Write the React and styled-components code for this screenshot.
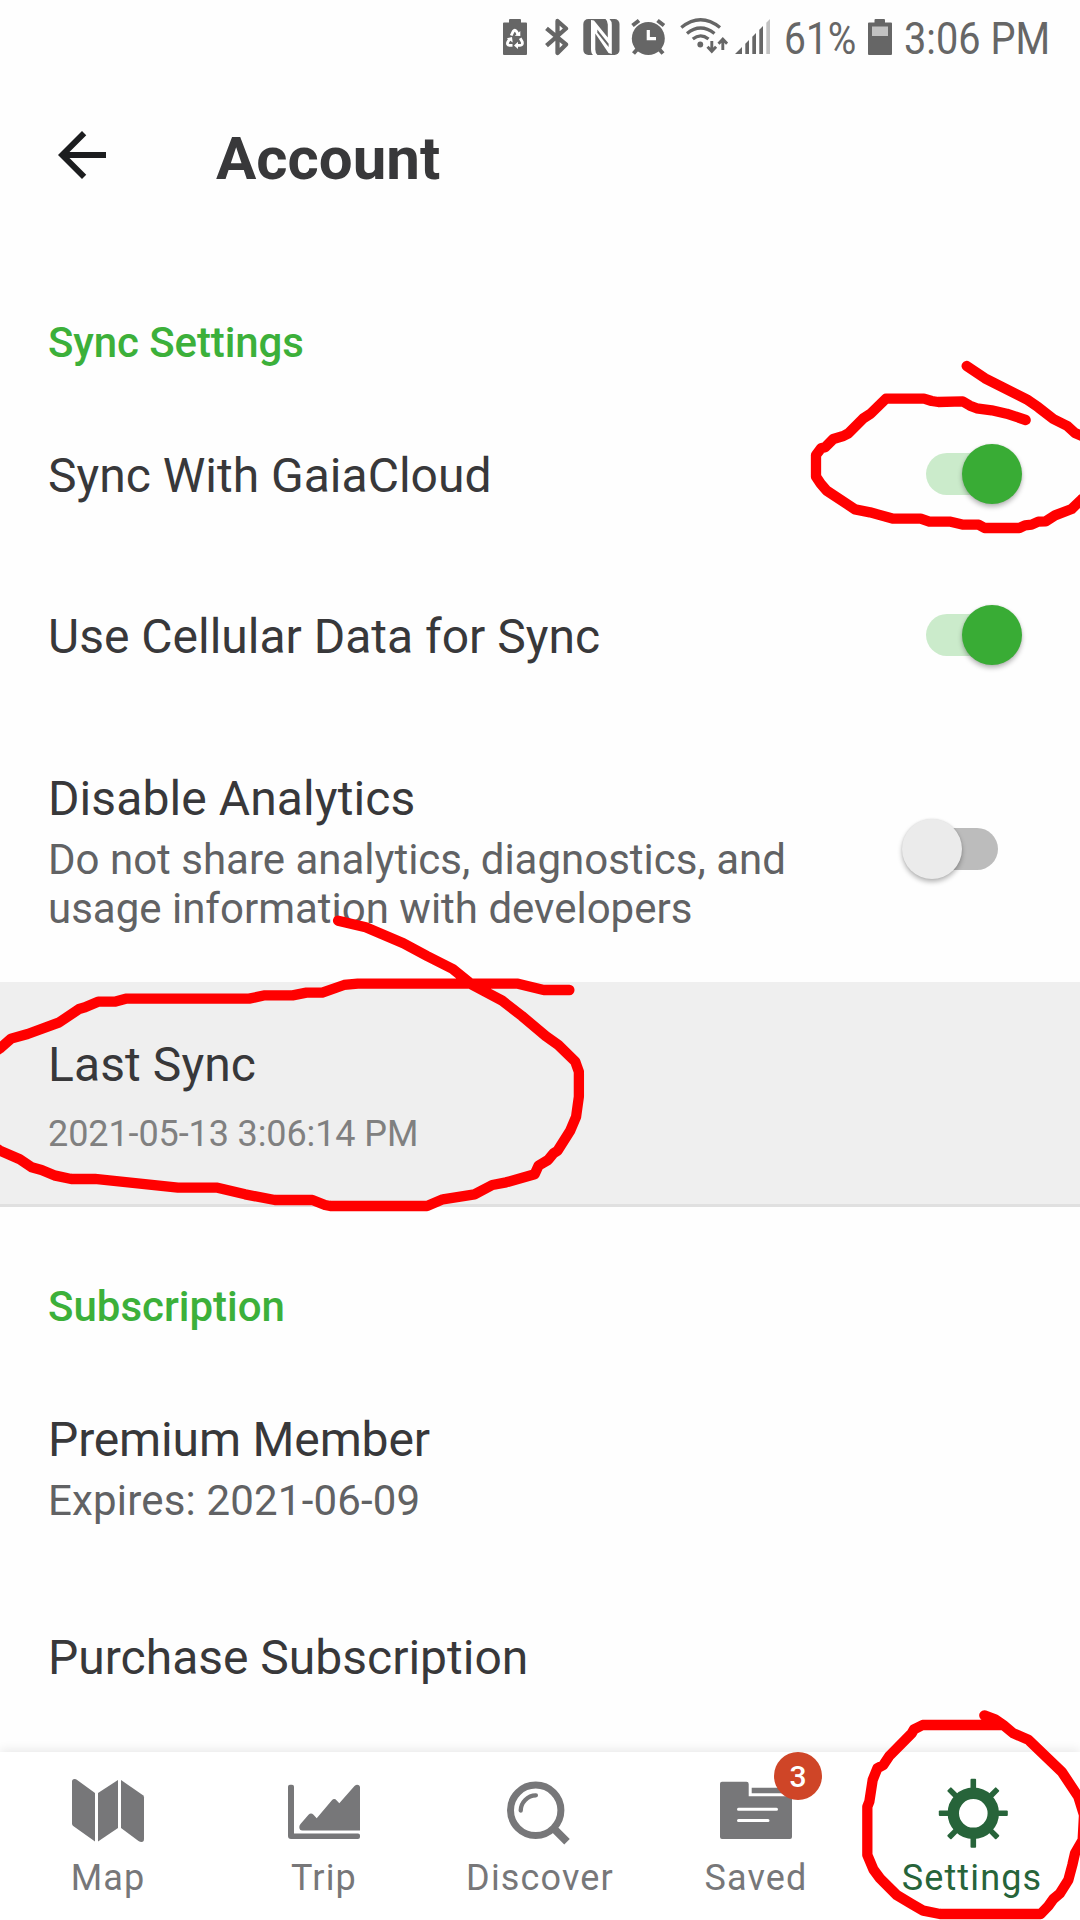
import React from "react";
import styled, { createGlobalStyle, css } from "styled-components";

const Global = createGlobalStyle`
  * { box-sizing: border-box; }
  html, body { margin: 0; padding: 0; background: #fefefe; }
  body { font-family: Roboto, "Liberation Sans", sans-serif; }
`;

const Screen = styled.div`
  position: relative;
  width: 1080px;
  height: 1920px;
  display: flex;
  flex-direction: column;
  overflow: hidden;
  background: #fefefe;
`;

const StatusBar = styled.header`
  height: 72px;
  padding: 18px 32px 0 503px;
  display: flex;
  align-items: flex-start;
  color: #666;
`;

const StatusIcon = styled.svg`
  flex: none;
  display: block;
  width: ${(p) => p.$w}px;
  height: 38px;
  margin-right: ${(p) => p.$gap || 0}px;
`;

const StatusText = styled.span`
  flex: none;
  width: ${(p) => p.$w}px;
  margin-right: ${(p) => p.$gap || 0}px;
  font-size: 45px;
  line-height: 41px;
  white-space: nowrap;
  transform: scaleX(${(p) => p.$scale});
  transform-origin: left;
`;

const TitleBar = styled.div`
  display: flex;
  align-items: flex-start;
  gap: 98px;
  height: 168px;
  padding: 47px 46px 0;
`;

const BackIcon = styled.svg`
  display: block;
  width: 72px;
  height: 72px;
  fill: #1c1d1f;
`;

const PageTitle = styled.h1`
  margin: 0;
  font-size: 60px;
  line-height: 79px;
  font-weight: 700;
  color: #38383a;
`;

const Content = styled.main`
  flex: 1;
  min-height: 0;
  overflow: hidden;
`;

const SectionTitle = styled.h2`
  margin: 0;
  padding: ${(p) => p.$top}px 48px ${(p) => p.$bottom}px;
  font-size: 42px;
  line-height: 56px;
  font-weight: 500;
  letter-spacing: ${(p) => p.$tracking || 0}px;
  color: #3cb03a;
`;

const Row = styled.div`
  display: flex;
  align-items: center;
  justify-content: space-between;
  height: ${(p) => p.$h}px;
  padding: 0 58px 0 48px;
  ${(p) =>
    p.$pressed &&
    css`
      background: #efefef;
      border-bottom: 3px solid #e0e0e0;
    `}
`;

const RowText = styled.div`
  display: flex;
  flex-direction: column;
  gap: ${(p) => p.$gap || 0}px;
`;

const Label = styled.span`
  padding-top: 4px;
  display: block;
  font-size: 48px;
  line-height: 58px;
  letter-spacing: ${(p) => p.$tracking || 0}px;
  color: #38383a;
`;

const Description = styled.span`
  max-width: 760px;
  font-size: 42px;
  line-height: 49px;
  letter-spacing: ${(p) => p.$tracking || 0}px;
  color: #616264;
`;

const Timestamp = styled.span`
  font-size: 36px;
  line-height: 42px;
  letter-spacing: -0.1px;
  color: #808080;
`;

const SwitchBox = styled.span`
  position: relative;
  flex: none;
  width: 120px;
  height: 60px;
  padding: 9px 24px;
  display: block;
`;

const Track = styled.span`
  display: block;
  height: 42px;
  border-radius: 21px;
  background: ${(p) => (p.$on ? "#cbebcb" : "#bcbcbc")};
`;

const Thumb = styled.span`
  position: absolute;
  top: 0;
  left: ${(p) => (p.$on ? 60 : 0)}px;
  width: 60px;
  height: 60px;
  border-radius: 50%;
  background: ${(p) => (p.$on ? "#39ac35" : "#ebebeb")};
  box-shadow: 0 3px 5px rgba(0, 0, 0, 0.28), 0 0 2px rgba(0, 0, 0, 0.1);
`;

const TabBar = styled.nav`
  flex: none;
  height: 168px;
  display: grid;
  grid-template-columns: repeat(5, 1fr);
  background: #fff;
  box-shadow: 0 -2px 10px rgba(0, 0, 0, 0.09);
`;

const Tab = styled.div`
  display: flex;
  flex-direction: column;
  align-items: center;
  gap: 9px;
  padding-top: 24px;
  color: ${(p) => (p.$active ? "#27643a" : "#777779")};
`;

const TabGlyph = styled.div`
  position: relative;
  width: 72px;
  height: 72px;
  svg {
    display: block;
    width: 72px;
    height: 72px;
    overflow: visible;
  }
`;

const TabLabel = styled.span`
  font-size: 36px;
  line-height: 42px;
  letter-spacing: 1.15px;
`;

const Badge = styled.span`
  position: absolute;
  top: -24px;
  left: 54px;
  width: 48px;
  height: 48px;
  border-radius: 50%;
  background: #cf4527;
  color: #fff;
  font-size: 30px;
  font-weight: 500;
  line-height: 49px;
  text-align: center;
`;

const Ink = styled.svg`
  position: absolute;
  inset: 0;
  width: 1080px;
  height: 1920px;
  pointer-events: none;
  polyline {
    fill: none;
    stroke: #ff0000;
    stroke-width: 10.3px;
    stroke-linecap: round;
    stroke-linejoin: round;
    vector-effect: non-scaling-stroke;
  }
`;

const Switch = ({ on }) => (
  <SwitchBox role="switch" aria-checked={on}>
    <Track $on={on} />
    <Thumb $on={on} />
  </SwitchBox>
);

const MapGlyph = () => (
  <svg viewBox="0 0 72 72" fill="currentColor">
    <path d="M0 5.5Q0 3 2.5 3Q4 3 5.5 4.200L23 17V65.500L1.200 50Q0 49 0 47.500Z" />
    <path d="M26 17L46 4V52L26 65.500Z" />
    <path d="M49 4L71 19.200Q72 20 72 21.500V63Q72 66 69.500 66Q68 66 66.500 65L49 52Z" />
  </svg>
);

const TripGlyph = () => (
  <svg viewBox="0 0 72 72" fill="currentColor">
    <path d="M2 8.700H4Q6 8.700 6 10.700V57.500H70Q72 57.500 72 59.500V61Q72 63 70 63H3Q0 63 0 60V10.700Q0 8.700 2 8.700Z" />
    <path d="M14.500 54.500Q11.300 54.500 11.300 51Q11.300 49.500 12.500 48L20.500 38.700Q23 36.200 25.500 38.700L28.700 42.300L43.700 24.500Q46.300 21.700 48.700 24.500L51.300 27.300L66.500 10Q69 7.700 71 9.300Q72 10 72 11.500V54.500Z" />
  </svg>
);

const DiscoverGlyph = () => (
  <svg viewBox="0 0 72 72" fill="none" stroke="currentColor">
    <circle cx="31.700" cy="34.300" r="25.200" strokeWidth="7" />
    <path d="M16.700 34.600A15.500 15.500 0 0 1 31.900 19.400" strokeWidth="4.300" strokeLinecap="round" />
    <path d="M50 52.800L63 65.800" strokeWidth="7.800" />
  </svg>
);

const SavedGlyph = () => (
  <svg viewBox="0 0 72 72" fill="currentColor">
    <path d="M2 5.700H26.500Q28.700 5.700 28.700 8V20.300H72V61Q72 63 70 63H2Q0 63 0 61V7.700Q0 5.700 2 5.700Z" />
    <path d="M31.700 11.700H72V17.300H31.700Z" />
    <path d="M18.500 33.200H56.500M18.500 44.600H48" stroke="#fff" strokeWidth="3" strokeLinecap="round" />
  </svg>
);

const SettingsGlyph = () => (
  <svg viewBox="0 0 72 72" fill="none" stroke="currentColor">
    <circle cx="37.300" cy="37.300" r="20" strokeWidth="11.400" />
    {[0, 45, 90, 135, 180, 225, 270, 315].map((a) => (
      <rect
        key={a}
        x="34.500"
        y="2.800"
        width="5.600"
        height="11"
        rx="1"
        fill="currentColor"
        stroke="none"
        transform={`rotate(${a} 37.3 37.3)`}
      />
    ))}
  </svg>
);

const StatusIcons = () => (
  <>
    <StatusIcon $w={24} $gap={18} viewBox="0 0 24 38" fill="currentColor">
      <path d="M7 1H17Q18 1 18 2V4.500H23Q24 4.500 24 5.500V36Q24 37 23 37H1Q0 37 0 36V5.500Q0 4.500 1 4.500H6V2Q6 1 7 1Z" />
      <g fill="none" stroke="#fff" strokeWidth="2.800" strokeLinejoin="round">
        <path d="M8.200 17.500L10.200 13.300Q11.800 11.200 13.400 13.300L15 16.200" />
        <path d="M17.200 20.200L19.300 24Q20 27.200 17 27.400H14" />
        <path d="M9.500 27.400H6.500Q3.600 27.200 4.800 24L6.600 21" />
      </g>
      <path d="M11.800 17.700L17.300 18V13Z M15 23.800V31L11 27.400Z M3.800 20.200L9 19L9.700 24.500Z" fill="#fff" />
    </StatusIcon>
    <StatusIcon $w={24} $gap={14} viewBox="0 0 24 38" fill="none" stroke="currentColor" strokeWidth="4.300" strokeLinejoin="round">
      <path d="M1.500 10.300L21 26.500L12.500 35V3L21 10.500L1.500 27.700" />
    </StatusIcon>
    <StatusIcon $w={37} $gap={11} viewBox="0 0 37 38">
      <rect x="0.300" y="1" width="36.200" height="36" rx="5" fill="currentColor" />
      <path d="M8 2L11 2.500L24.800 19.500V6.500Q24.800 3 22.500 1H26.500Q28.800 3 28.800 7V36L25.500 35L12.300 15.500V31.500Q12.300 35 14.500 37H10Q8 35.500 8 31Z" fill="#fff" />
      <path d="M14.300 11.500L25.600 25.800V29L14.300 14.800Z" fill="currentColor" />
    </StatusIcon>
    <StatusIcon $w={36} $gap={13} viewBox="0 0 36 38" fill="currentColor">
      <circle cx="17.300" cy="20.500" r="16.500" />
      <path d="M1.500 7.500L8 2.500M33 7.500L26.500 2.500M6.500 31L2.500 35.500M28 31L32 35.500" stroke="currentColor" strokeWidth="4" />
      <path d="M17.300 12V20.700H25" fill="none" stroke="#fff" strokeWidth="3.200" />
    </StatusIcon>
    <StatusIcon $w={48} $gap={7} viewBox="0 0 48 38" fill="none" stroke="currentColor" strokeWidth="3.300">
      <path d="M1.300 9.500Q20.500 -6 40 9.500M7 15.500Q20.500 4.500 34.500 15.500M12.800 21Q20.500 14.800 28.500 21" />
      <circle cx="20.300" cy="26.500" r="2.900" fill="currentColor" stroke="none" />
      <path d="M31.800 23V33M27.500 28.800L31.800 33.300L36.100 28.800M42.800 32V22.500M38.500 25.700L42.800 21.200L47.100 25.700" strokeWidth="2.900" />
    </StatusIcon>
    <StatusIcon $w={36} $gap={13} viewBox="0 0 36 38" fill="currentColor">
      <path d="M0 36L7 29V36ZM10.300 25.700L14 22V36H10.300ZM17.300 18.700L21 15V36H17.300ZM24.300 11.700L28 8V36H24.300Z" />
      <path d="M31.300 4.700L35 1V36H31.300Z" fill="#c2c2c2" />
    </StatusIcon>
    <StatusText $w={72} $gap={12} $scale={0.865}>61%</StatusText>
    <StatusIcon $w={24} $gap={12} viewBox="0 0 24 38" fill="currentColor">
      <path d="M7.500 1H16Q17 1 17 2V4.500H23Q24 4.500 24 5.500V36Q24 37 23 37H1Q0 37 0 36V5.500Q0 4.500 1 4.500H6.500V2Q6.500 1 7.500 1Z" />
      <path d="M4 8.500H20V18H4Z" fill="#c2c2c2" />
    </StatusIcon>
    <StatusText $w={144} $scale={0.882}>3:06 PM</StatusText>
  </>
);

const TABS = [
  { name: "Map", Glyph: MapGlyph },
  { name: "Trip", Glyph: TripGlyph },
  { name: "Discover", Glyph: DiscoverGlyph },
  { name: "Saved", Glyph: SavedGlyph, badge: 3 },
  { name: "Settings", Glyph: SettingsGlyph, active: true },
];

const Annotations = () => (
  <Ink viewBox="0 0 1080 1920">
    <g transform="translate(780 340) scale(0.33333)">
      <polyline points="737,240 680,221 635,211 590,205 570,197 548,184 475,186 455,183 432,176 318,176 272,221 250,235 205,280 190,288 160,297 135,322 123,325 108,345 108,410 122,431 140,452 225,508 270,517 340,536 422,536 448,545 512,545 550,554 596,554 614,564 718,564 735,556 755,554 775,545 797,544 825,526 875,507 905,478 960,440" />
      <polyline points="560,78 615,115 740,178 775,202 820,237 862,258 885,279 910,290 960,330" />
    </g>
    <g transform="translate(0 760) scale(0.39541 0.33333)">
      <polyline points="855,482 925,502 1020,550 1080,588 1145,627 1195,675 1270,722 1320,768 1380,828 1412,855 1455,905 1464,935 1464,1010 1457,1070 1442,1112 1410,1172 1400,1180 1386,1200 1362,1217 1352,1243 1280,1267 1245,1275 1200,1303 1120,1318 1080,1338 835,1338 822,1335 790,1320 695,1320 620,1303 550,1283 450,1283 240,1257 180,1257 140,1247 105,1230 80,1222 50,1198 0,1172 -30,1150 -30,890 0,865 28,836 70,822 150,787 200,747 215,742 248,725 290,725 318,716 630,716 670,706 740,706 775,698 815,698 870,675 905,671 1310,671 1375,690 1440,690" />
    </g>
    <g transform="translate(840 1700) scale(0.33333)">
      <polyline points="433,46 465,58 490,75 520,100 565,119 665,215 715,290 732,345 728,420 705,460 697,495 685,540 660,580 640,597 625,618 602,642 300,642 250,632 215,612 170,585 120,535 100,508 82,465 82,320 88,305 98,240 112,205 130,195 148,168 215,100 222,88 248,75 480,75" />
    </g>
  </Ink>
);

export default function App() {
  return (
    <Screen>
      <Global />
      <StatusBar>
        <StatusIcons />
      </StatusBar>
      <TitleBar>
        <BackIcon viewBox="0 0 24 24">
          <path d="M20 11H7.830l5.590-5.590L12 4l-8 8 8 8 1.410-1.410L7.830 13H20v-2z" />
        </BackIcon>
        <PageTitle>Account</PageTitle>
      </TitleBar>
      <Content>
        <SectionTitle $top={75} $bottom={23} $tracking={-0.1}>
          Sync Settings
        </SectionTitle>
        <Row $h={159}>
          <Label>Sync With GaiaCloud</Label>
          <Switch on />
        </Row>
        <Row $h={163}>
          <Label>Use Cellular Data for Sync</Label>
          <Switch on />
        </Row>
        <Row $h={266}>
          <RowText $gap={7}>
            <Label $tracking={0.1}>Disable Analytics</Label>
            <Description>
              Do not share analytics, diagnostics, and usage information with developers
            </Description>
          </RowText>
          <Switch on={false} />
        </Row>
        <Row $h={225} $pressed>
          <RowText $gap={19}>
            <Label $tracking={0.1}>Last Sync</Label>
            <Timestamp>2021-05-13 3:06:14 PM</Timestamp>
          </RowText>
        </Row>
        <SectionTitle $top={72} $bottom={23}>
          Subscription
        </SectionTitle>
        <Row $h={215}>
          <RowText $gap={7}>
            <Label $tracking={-0.15}>Premium Member</Label>
            <Description $tracking={0.18}>Expires: 2021-06-09</Description>
          </RowText>
        </Row>
        <Row $h={165}>
          <Label>Purchase Subscription</Label>
        </Row>
      </Content>
      <TabBar>
        {TABS.map(({ name, Glyph, badge, active }) => (
          <Tab key={name} $active={active}>
            <TabGlyph>
              <Glyph />
              {badge && <Badge>{badge}</Badge>}
            </TabGlyph>
            <TabLabel>{name}</TabLabel>
          </Tab>
        ))}
      </TabBar>
      <Annotations />
    </Screen>
  );
}
